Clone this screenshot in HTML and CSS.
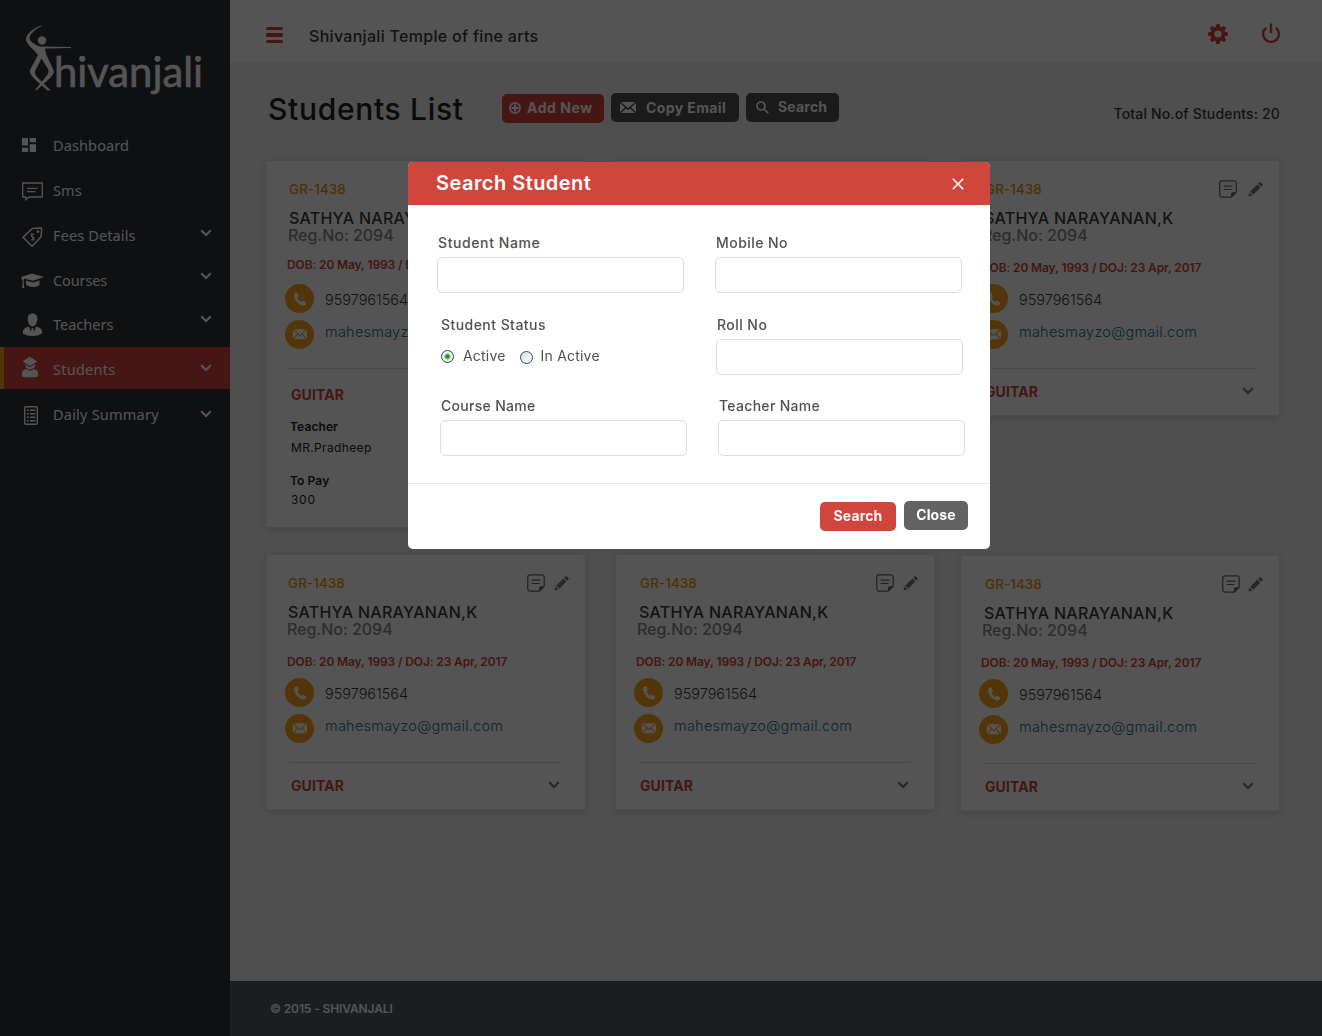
FILE: index.html
```html
<!DOCTYPE html>
<html lang="en">
<head>
<meta charset="utf-8">
<title>Shivanjali - Students List</title>
<link rel="stylesheet" href="styles.css">
</head>
<body>
<svg class="sprite" width="0" height="0">
  <symbol id="chev" viewBox="0 0 12 8"><path d="M1.200 1.200 6 6l4.800-4.800" fill="none" stroke="currentColor" stroke-width="2.100"/></symbol>
  <symbol id="note" viewBox="0 0 18 18"><path d="M3 .8h12a2.200 2.200 0 0 1 2.200 2.200v9.300l-4.900 4.900H3A2.200 2.200 0 0 1 .8 15V3A2.200 2.200 0 0 1 3 .8z" fill="none" stroke="currentColor" stroke-width="1.200"/><path d="M4.500 6.200h9M4.500 9.500h8" stroke="currentColor" stroke-width="1.200"/><path d="M12 17.500v-3.300q0-2 2-2h3.500z" fill="currentColor"/></symbol>
  <symbol id="pencil" viewBox="0 0 15 15"><path d="M.4 14.600 1.400 10.600 4.400 13.600zM2.200 9.800 9.400 2.600l3 3-7.200 7.200zM10.200 1.800l1.200-1.200q.8-.7 1.600 0l1.400 1.400q.7.800 0 1.600l-1.200 1.200z" fill="currentColor"/></symbol>
  <symbol id="phone" viewBox="0 0 29 29"><circle cx="14.500" cy="14.500" r="14.500" fill="#f9a11b"/><path d="M11.300 8.200c-1.300.4-2.300 1.500-2.200 3.200.4 5 4.500 9.500 9.600 10 1.400.1 2.300-.9 2.600-2.100q.1-.7-.5-1.100l-2.600-1.400q-.6-.3-1.100.2l-1 1q-2.600-1.400-3.600-4l1-1q.4-.4.2-1l-1.200-3.200q-.4-.8-1.200-.6z" fill="#fff"/></symbol>
  <symbol id="mail" viewBox="0 0 29 29"><circle cx="14.500" cy="14.500" r="14.500" fill="#f9a11b"/><rect x="7.800" y="9.300" width="14.200" height="10" rx="1" fill="#fff"/><path d="M8 9.300 14.900 15.600 21.800 9.300M8 19.300l4.700-5.200M21.800 19.300l-4.700-5.200" fill="none" stroke="#f9a11b" stroke-width="1.100"/></symbol>
</svg>

<div class="app">
  <aside class="sidebar">
    <svg class="logo" width="230" height="123" viewBox="0 0 230 123" fill="#fff">
      <circle cx="42" cy="40.500" r="4.200"/>
      <path d="M41.500 25.300C33 28.500 26 34 26 39.500c0 4 7 9.500 12 15.500L30 70c-1 3 2 6 5 9.500l12.500 11 3-.3L37 77c-2-2.500-2.500-4.500-1.500-7l6-11.500L48 69c1 2.500.5 4.500-1.500 7L35 90l1.500.3L50 78c3-3 4.500-5.500 3.500-8L46 54l-1-5.500 26-.6v-.9l-31.500-.4C33.500 44 29 40.500 29.500 37.500c.5-4 6-8.500 12-11.600z"/>
      <text class="logo-text" x="54" y="86.500" textLength="149" lengthAdjust="spacingAndGlyphs">hivanjali</text>
    </svg>
    <nav>
      <a class="nav-item"><svg width="24" height="24" viewBox="0 0 24 24" fill="currentColor"><path d="M1 5h6v7.500H1zM1 14.700h6V19H1zM8.700 5H15v4.300H8.700zM8.700 11.300H15V19H8.700z"/></svg><span>Dashboard</span></a>
      <a class="nav-item"><svg width="24" height="24" viewBox="0 0 24 24" fill="none" stroke="currentColor" stroke-width="1.300"><path d="M1.700 5h19.600v14H8l-3.300 2.600V19h-3zM6 10.400h10.500M6 13.700h8.500"/></svg><span>Sms</span></a>
      <a class="nav-item"><svg width="24" height="24" viewBox="0 0 24 24" fill="none" stroke="currentColor" stroke-width="1.500"><path d="m2 14.300 9.500-8.800 8.200-.5q1 0 1 1l-.7 8-9 9.300z"/><circle cx="17" cy="8.700" r=".6"/><path d="M13.300 11.500q-2-1-2.600.5t1 2 1 2-2.500.4M10 10.500l3 7" stroke-width="1.200"/></svg><span>Fees Details</span><svg class="chev" width="12" height="8"><use href="#chev"/></svg></a>
      <a class="nav-item"><svg width="24" height="24" viewBox="0 0 24 24" fill="currentColor"><path d="M0 9 11 5.500 23 9l-11 3.800L3 10.500l-.4 3 .7 6.500H1.200l.5-6.500z"/><path d="M5 12.500l7 2 6.500-2v4q-1 2-6.500 2.500-5-.2-7-2.500z"/></svg><span>Courses</span><svg class="chev" width="12" height="8"><use href="#chev"/></svg></a>
      <a class="nav-item"><svg width="24" height="24" viewBox="0 0 24 24" fill="currentColor"><path d="M11.500 0.500c3.500 0 5 2.500 4.800 6-.2 3.500-2.300 7-4.800 7s-4.600-3.500-4.800-7c-.2-3.500 1.300-6 4.800-6z"/><path d="M8 13.500l2 5.500 .7-4h1.600l.7 4 2-5.500q5.500 1.300 6 4.500l.2 2.500q-4 2.500-9.700 2.500T1.800 20.500L2 18q.5-3.200 6-4.500z"/></svg><span>Teachers</span><svg class="chev" width="12" height="8"><use href="#chev"/></svg></a>
      <a class="nav-item active"><svg width="24" height="24" viewBox="0 0 24 24" fill="currentColor"><path d="M1.500 5.500 9 .8l7.200 4.700L9 10z"/><path d="M3.800 8 9 11.200 14.300 8q.2 4.500-5.300 5.500Q4.500 13 3.800 8z"/><path d="M1 17q.5-3.500 4.500-4Q9 16.500 12.500 13q4 .5 4.500 4v2.500q0 1.700-2 1.700H3q-2 0-2-1.700z"/></svg><span>Students</span><svg class="chev" width="12" height="8"><use href="#chev"/></svg></a>
      <a class="nav-item last"><svg width="24" height="24" viewBox="0 0 24 24" fill="none" stroke="currentColor" stroke-width="1.400"><rect x="3.700" y="3.700" width="12.600" height="17.600" rx="1.200"/><path d="M5.800 7.300h2M9 7.300h5.300M5.800 10.800h2M9 10.800h5.300M5.800 14.300h2M9 14.300h5.300M5.800 17.800h2M9 17.800h5.300"/></svg><span>Daily Summary</span><svg class="chev" width="12" height="8"><use href="#chev"/></svg></a>
    </nav>
  </aside>

  <div class="main">
    <header class="topbar">
      <div class="burger"><i></i><i></i><i></i></div>
      <div class="org">Shivanjali Temple of fine arts</div>
      <svg class="gear" width="20" height="20" viewBox="0 0 20 20"><g fill="#d0453c"><circle cx="10" cy="10" r="7.500"/><g id="teeth"><rect x="7.900" y="0" width="4.200" height="20" rx="1.500"/><rect x="0" y="7.900" width="20" height="4.200" rx="1.500"/></g><use href="#teeth" transform="rotate(45 10 10)"/></g><circle cx="10" cy="10" r="3.600" fill="#fff"/></svg>
      <svg class="power" width="20" height="22" viewBox="0 0 20 22" fill="none" stroke="#d0453c" stroke-width="2.400"><path d="M10 .5v9.500M5.300 4.700a7.900 7.900 0 1 0 9.400 0"/></svg>
    </header>

    <main class="content">
      <div class="page-head">
        <h1>Students List</h1>
        <button class="btn add"><svg width="12" height="12" viewBox="0 0 12 12" fill="none" stroke="currentColor"><circle cx="6" cy="6" r="5.100" stroke-width="1.800"/><path d="M6 2.400v7.200M2.400 6h7.200" stroke-width="2.200"/></svg>Add New</button>
        <button class="btn copy"><svg width="16" height="11" viewBox="0 0 16 11" fill="currentColor"><path d="M1 0h14L8 6zM0 1l5 4.500L0 10zM16 1l-5 4.500L16 10zM1 11l5-4.500L8 8l2-1.500L15 11z"/></svg>Copy Email</button>
        <button class="btn find"><svg width="13" height="13" viewBox="0 0 13 13" fill="none" stroke="currentColor" stroke-width="1.700"><circle cx="5" cy="5" r="4"/><path d="m8 8 4.200 4.200"/></svg>Search</button>
        <div class="total">Total No.of Students: 20</div>
      </div>

      <div class="row row-1">
        <article class="card open">
          <div class="card-top"><span class="gr">GR-1438</span></div>
          <div class="name">SATHYA NARAYANAN,K</div>
          <div class="reg">Reg.No: 2094</div>
          <div class="dob">DOB: 20 May, 1993 / DOJ: 23 Apr, 2017</div>
          <div class="contact tel"><svg width="29" height="29"><use href="#phone"/></svg><span>9597961564</span></div>
          <div class="contact email"><svg width="29" height="29"><use href="#mail"/></svg><span>mahesmayzo@gmail.com</span></div>
          <div class="course"><span>GUITAR</span></div>
          <dl class="details"><dt>Teacher</dt><dd>MR.Pradheep</dd><dt>To Pay</dt><dd class="amount">300</dd></dl>
        </article>
        <article class="card plain"></article>
        <article class="card third top">
          <div class="card-top"><span class="gr">GR-1438</span><svg class="note" width="18" height="18"><use href="#note"/></svg><svg width="15" height="15"><use href="#pencil"/></svg></div>
          <div class="name">SATHYA NARAYANAN,K</div>
          <div class="reg">Reg.No: 2094</div>
          <div class="dob">DOB: 20 May, 1993 / DOJ: 23 Apr, 2017</div>
          <div class="contact tel"><svg width="29" height="29"><use href="#phone"/></svg><span>9597961564</span></div>
          <div class="contact email"><svg width="29" height="29"><use href="#mail"/></svg><span>mahesmayzo@gmail.com</span></div>
          <div class="course"><span>GUITAR</span><svg width="12" height="8"><use href="#chev"/></svg></div>
        </article>
      </div>

      <div class="row row-2">
        <article class="card">
          <div class="card-top"><span class="gr">GR-1438</span><svg class="note" width="18" height="18"><use href="#note"/></svg><svg width="15" height="15"><use href="#pencil"/></svg></div>
          <div class="name">SATHYA NARAYANAN,K</div>
          <div class="reg">Reg.No: 2094</div>
          <div class="dob">DOB: 20 May, 1993 / DOJ: 23 Apr, 2017</div>
          <div class="contact tel"><svg width="29" height="29"><use href="#phone"/></svg><span>9597961564</span></div>
          <div class="contact email"><svg width="29" height="29"><use href="#mail"/></svg><span>mahesmayzo@gmail.com</span></div>
          <div class="course"><span>GUITAR</span><svg width="12" height="8"><use href="#chev"/></svg></div>
        </article>
        <article class="card second">
          <div class="card-top"><span class="gr">GR-1438</span><svg class="note" width="18" height="18"><use href="#note"/></svg><svg width="15" height="15"><use href="#pencil"/></svg></div>
          <div class="name">SATHYA NARAYANAN,K</div>
          <div class="reg">Reg.No: 2094</div>
          <div class="dob">DOB: 20 May, 1993 / DOJ: 23 Apr, 2017</div>
          <div class="contact tel"><svg width="29" height="29"><use href="#phone"/></svg><span>9597961564</span></div>
          <div class="contact email"><svg width="29" height="29"><use href="#mail"/></svg><span>mahesmayzo@gmail.com</span></div>
          <div class="course"><span>GUITAR</span><svg width="12" height="8"><use href="#chev"/></svg></div>
        </article>
        <article class="card third low">
          <div class="card-top"><span class="gr">GR-1438</span><svg class="note" width="18" height="18"><use href="#note"/></svg><svg width="15" height="15"><use href="#pencil"/></svg></div>
          <div class="name">SATHYA NARAYANAN,K</div>
          <div class="reg">Reg.No: 2094</div>
          <div class="dob">DOB: 20 May, 1993 / DOJ: 23 Apr, 2017</div>
          <div class="contact tel"><svg width="29" height="29"><use href="#phone"/></svg><span>9597961564</span></div>
          <div class="contact email"><svg width="29" height="29"><use href="#mail"/></svg><span>mahesmayzo@gmail.com</span></div>
          <div class="course"><span>GUITAR</span><svg width="12" height="8"><use href="#chev"/></svg></div>
        </article>
      </div>
    </main>

    <footer class="footer">© 2015 - SHIVANJALI</footer>
  </div>
</div>

<div class="overlay">
  <form class="modal">
    <div class="modal-head"><h2>Search Student</h2><svg width="12" height="12" viewBox="0 0 12 12"><path d="m.8.8 10.400 10.400M11.200.8.8 11.200" stroke="#fff" stroke-width="1.600"/></svg></div>
    <div class="modal-body">
      <div class="fields f1">
        <label>Student Name<input type="text"></label>
        <label>Mobile No<input type="text"></label>
      </div>
      <div class="fields f2">
        <div class="status"><div class="status-label">Student Status</div>
          <div class="radios"><i class="radio on"></i><span>Active</span><i class="radio off"></i><span>In Active</span></div>
        </div>
        <label>Roll No<input type="text"></label>
      </div>
      <div class="fields f3">
        <label>Course Name<input type="text"></label>
        <label>Teacher Name<input type="text"></label>
      </div>
    </div>
    <div class="modal-foot"><button class="btn go" type="button">Search</button><button class="btn close" type="button">Close</button></div>
  </form>
</div>
</body>
</html>
```
FILE: styles.css
```css
* { box-sizing: border-box; }
body { margin: 0; font-family: Inter, "Liberation Sans", sans-serif; color: #3c3c3c; }
h1, h2, dl, dd { margin: 0; }
svg { display: block; flex: none; }
.sprite { position: absolute; }

.app { display: flex; width: 1322px; height: 1036px; overflow: hidden; }

/* Sidebar */
.sidebar { width: 230px; flex: none; background: #303338; color: #fff; }
.logo-text { font: 400 43px Lato, sans-serif; stroke: #fff; stroke-width: .6px; }
.nav-item { display: flex; align-items: center; height: 45px; padding-left: 21px; font: 400 14.500px "Noto Sans", sans-serif; letter-spacing: .12px; }
.nav-item span { flex: 1; margin: -2px 0 0 8px; }
.nav-item .chev { margin-right: 18.500px; }
.nav-item svg:first-child { margin-top: -1px; }
.nav-item:nth-child(3) .chev { margin-bottom: 6px; }
.nav-item:nth-child(4) { letter-spacing: -.12px; }
.nav-item:nth-child(4) .chev { margin-bottom: 10px; }
.nav-item:nth-child(5) { height: 44px; letter-spacing: 0; }
.nav-item:nth-child(5) .chev { margin-bottom: 13px; }
.nav-item.active { height: 42px; padding-left: 17px; border-left: 4px solid #f9a11b; background: #d0453c; letter-spacing: .25px; }
.nav-item.active span { margin-top: 1px; }
.nav-item.last { height: 50px; letter-spacing: .22px; }
.nav-item.last svg:first-child { margin-top: 1px; }
.nav-item.last span { margin-top: 0; }

/* Top bar */
.main { flex: 1; display: flex; flex-direction: column; background: #eee; }
.topbar { display: flex; align-items: center; height: 63px; padding: 5px 41px 0 36px; background: #fff; }
.burger { display: grid; gap: 3px; width: 17px; margin-top: 2px; }
.burger i { height: 3.400px; border-radius: 1.500px; background: #d0453c; }
.org { flex: 1; margin: 3px 0 0 26px; font-size: 16px; font-weight: 500; letter-spacing: .3px; }
.gear { margin-right: 33px; }
.power { margin-top: -1px; }

/* Page head */
.content { flex: 1; }
.page-head { display: flex; align-items: flex-start; height: 98px; padding: 30px 42px 0 38px; }
h1 { width: 234px; font-size: 30px; line-height: 32px; font-weight: 500; letter-spacing: .68px; color: #222; white-space: nowrap; }
.btn { display: flex; align-items: center; height: 29px; padding: 0; border: 0; border-radius: 5px; background: #4f4f4f; color: #fff; font: 700 14px Inter, sans-serif; letter-spacing: .4px; white-space: nowrap; }
.add { width: 102px; margin-top: 1px; padding: 0 0 2px 7px; gap: 6px; background: #d0453c; letter-spacing: .55px; }
.copy { width: 128px; margin-left: 7px; padding-left: 9px; gap: 10px; }
.find { width: 93px; margin-left: 7px; padding: 0 0 2px 10px; gap: 9px; letter-spacing: .2px; }
.find svg { margin-top: 2px; }
.total { flex: 1; margin-top: 11px; text-align: right; font-size: 14px; line-height: 20px; font-weight: 500; letter-spacing: .16px; white-space: nowrap; }

/* Cards */
.row { display: flex; align-items: flex-start; padding-left: 37px; }
.row-1 { height: 394px; }
.row-1 .card + .card { margin-left: 26px; }
.row-1 .card.third { margin-left: 32px; }
.row-2 .card.second { margin-left: 31px; }
.row-2 .card.third { margin-left: 27px; }
.card { width: 318px; height: 254px; padding: 18px 0 0 18px; background: #fff; box-shadow: 0 0 0 1px #e6e6e6, 0 2px 8px rgba(0, 0, 0, .16); }
.card.open { height: 366px; }
.card.low { margin-top: 1px; }
.card-top { display: flex; align-items: center; height: 20px; padding-right: 16.500px; }
.gr { flex: 1; margin-left: 3px; font-size: 13.500px; font-weight: 500; letter-spacing: .05px; color: #e8930f; }
.card-top svg { color: #777; }
.card-top .note { margin-right: 9px; color: #666; }
.name { margin: 10px 0 0 3px; font-size: 16px; line-height: 18px; font-weight: 500; letter-spacing: .26px; }
.reg { margin-left: 2px; font-size: 16px; line-height: 17px; font-weight: 500; letter-spacing: -.03px; color: #888; }
.dob { margin: 15px 0 7px 2px; font-size: 12px; line-height: 18px; font-weight: 600; letter-spacing: -.12px; color: #d0453c; }
.contact { display: flex; align-items: center; height: 29px; font-size: 14.500px; font-weight: 300; }
.contact span { margin-left: 11px; }
.tel { margin-bottom: 7px; letter-spacing: -.02px; }
.tel span { margin-top: 2px; }
.email { letter-spacing: .24px; color: #1d7186; }
.email span { margin-top: -6px; }
.course { display: flex; align-items: center; justify-content: space-between; width: 271px; height: 46px; margin: 19px 0 0 4px; padding: 0 0 0 2px; border-top: 1px solid #d8d8d8; font-size: 14px; font-weight: 700; letter-spacing: .1px; color: #d0453c; }
.course svg { margin-bottom: 1px; color: #777; }
.open .gr, .open .name { margin-left: 4px; }
.open .reg { margin-left: 3px; }
.open .dob { margin: 12px 0 10px 2px; }
.open .course { height: 47px; padding-top: 5px; }
.second .gr, .third .gr { margin-left: 6px; }
.second .name, .third .name { margin-left: 5px; }
.second .reg, .third .reg { margin-left: 3px; }
.second .course, .third .course { margin-left: 5px; padding: 0 1px; }
.third .card-top .note { margin-right: 8px; }
.top .card-top .note { margin-right: 11px; }
.details { padding: 2px 0 0 5px; font-size: 12px; color: #222; }
.details dt { line-height: 19px; font-weight: 600; letter-spacing: .1px; }
.details dd { margin-left: 1px; line-height: 23px; letter-spacing: .36px; }
.details dd + dt { margin-top: 12px; }
.details .amount { line-height: 20px; letter-spacing: .7px; }

.footer { height: 55px; padding-left: 40px; background: #56585c; color: #fff; font-size: 12px; line-height: 55px; font-weight: 600; letter-spacing: -.12px; }

/* Dialog */
.overlay { position: fixed; inset: 0; background: rgba(0, 0, 0, .67); }
.modal { position: absolute; left: 408px; top: 162px; width: 582px; height: 387px; border-radius: 5px; overflow: hidden; background: #fff; color: #505050; }
.modal-head { display: flex; justify-content: space-between; align-items: center; height: 43px; padding: 1px 26.500px 0 28px; background: #d0453c; color: #fff; }
h2 { margin-top: -2px; font-size: 20px; font-weight: 600; letter-spacing: .46px; }
.modal-body { display: flex; flex-direction: column; height: 278px; padding-top: 28px; }
.fields { display: grid; grid-template-columns: 247px 247px; column-gap: 31px; height: 60px; font-size: 14px; font-weight: 500; line-height: 20px; letter-spacing: .45px; }
.f1 { padding-left: 29px; margin-bottom: 22px; }
.f2 { padding-left: 30px; margin-bottom: 21px; }
.f3 { padding-left: 32px; letter-spacing: .3px; }
label { text-indent: 1px; }
.f1 label:first-child { letter-spacing: .6px; }
input { display: block; width: 247px; height: 36px; margin: 4px 0 0; border: 1px solid #dcdcdc; border-radius: 5px; background: #fff; }
.status { padding-left: 3px; }
.radios { display: flex; align-items: center; height: 22px; margin-top: 10px; font-size: 14px; font-weight: 400; letter-spacing: .2px; }
.radio { width: 13px; height: 13px; border: 1px solid #24486b; border-radius: 50%; background: linear-gradient(135deg, #d8dfdd, #fff); }
.radio.on { background: radial-gradient(circle, #2c9a1c 0 1.500px, #7cc36f 2.500px, #eef3ee 3.500px); }
.radio.off { margin: 2px 0 0 14px; }
.radios span { margin-left: 9px; }
.radios .off + span { margin-left: 8px; }
.modal-foot { display: flex; height: 66px; padding: 17px 22px 0 0; justify-content: flex-end; gap: 8px; border-top: 1px solid #e8e8e8; }
.modal-foot .btn { justify-content: center; padding-bottom: 2px; letter-spacing: .15px; }
.modal-foot .go { width: 76px; margin-top: 1px; background: #d0453c; }
.modal-foot .close { width: 64px; background: #636363; }
```
